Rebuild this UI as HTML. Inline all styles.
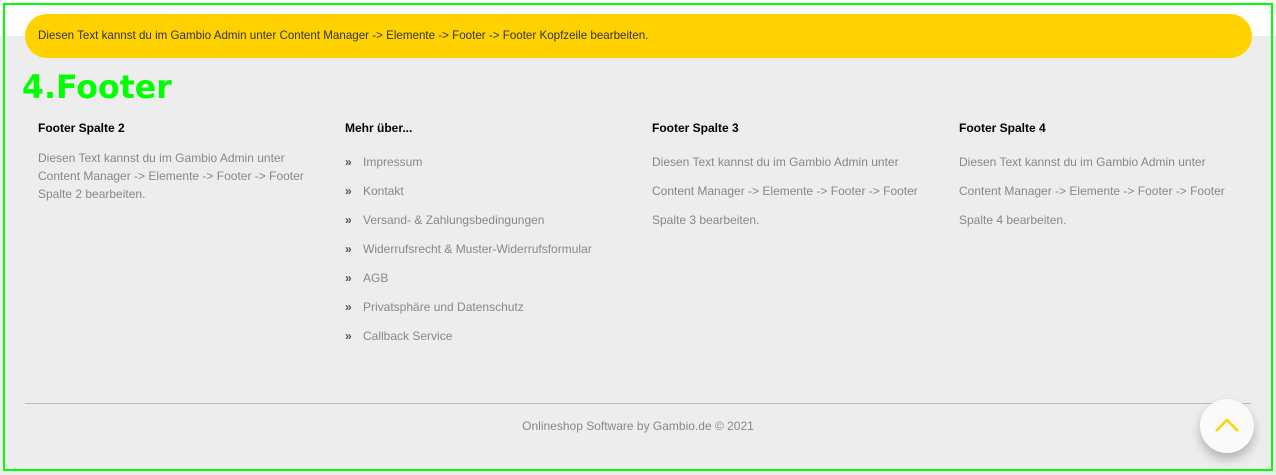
<!DOCTYPE html>
<html><head><meta charset="utf-8"><style>
*{margin:0;padding:0;box-sizing:border-box}
body{width:1276px;height:475px;background:#ededed;font-family:"Liberation Sans",sans-serif;position:relative;overflow:hidden}
.top{position:absolute;left:0;top:0;width:1276px;height:36px;background:#fff}
.frame{position:absolute;left:3px;top:3px;width:1270px;height:468px;border:2px solid #00ff00}
.bar{position:absolute;left:25px;top:14px;width:1227px;height:44px;background:#ffd200;border-radius:22px;font-size:11.6px;color:#333;padding-left:13px;line-height:44px}
h1{position:absolute;left:22px;top:70px;font-family:"DejaVu Sans",sans-serif;font-weight:bold;font-size:31.6px;color:#00ff00}
.col{position:absolute;top:120px;width:290px;font-size:12px;color:#888}
.col h3{font-size:12px;color:#000;font-weight:bold;height:26px;line-height:16px}
.col p{line-height:18px;margin-top:3px}
.col p.w{line-height:29px;margin-top:2px}
.col ul{list-style:none;margin-top:2px}
.col li{height:29px;line-height:29px}
.col li b{color:#555;font-size:12px;margin-right:7px;display:inline-block;width:11px}
hr{position:absolute;left:25px;top:403px;width:1226px;border:0;border-top:1px solid #bbb}
.copy{position:absolute;top:419px;left:0;width:1276px;text-align:center;font-size:12px;color:#888}
.btn{position:absolute;left:1200px;top:399px;width:54px;height:54px;border-radius:50%;background:#fafafa;box-shadow:0 6px 10px rgba(0,0,0,.25)}
</style></head><body>
<div class="top"></div>
<div class="bar">Diesen Text kannst du im Gambio Admin unter Content Manager -&gt; Elemente -&gt; Footer -&gt; Footer Kopfzeile bearbeiten.</div>
<h1>4.Footer</h1>
<div class="col" style="left:38px"><h3>Footer Spalte 2</h3><p>Diesen Text kannst du im Gambio Admin unter Content Manager -&gt; Elemente -&gt; Footer -&gt; Footer Spalte 2 bearbeiten.</p></div>
<div class="col" style="left:345px"><h3>Mehr über...</h3><ul>
<li><b>»</b>Impressum</li><li><b>»</b>Kontakt</li><li><b>»</b>Versand- &amp; Zahlungsbedingungen</li><li><b>»</b>Widerrufsrecht &amp; Muster-Widerrufsformular</li><li><b>»</b>AGB</li><li><b>»</b>Privatsphäre und Datenschutz</li><li><b>»</b>Callback Service</li></ul></div>
<div class="col" style="left:652px"><h3>Footer Spalte 3</h3><p class="w">Diesen Text kannst du im Gambio Admin unter Content Manager -&gt; Elemente -&gt; Footer -&gt; Footer Spalte 3 bearbeiten.</p></div>
<div class="col" style="left:959px"><h3>Footer Spalte 4</h3><p class="w">Diesen Text kannst du im Gambio Admin unter Content Manager -&gt; Elemente -&gt; Footer -&gt; Footer Spalte 4 bearbeiten.</p></div>
<hr>
<div class="copy">Onlineshop Software by Gambio.de © 2021</div>
<div class="btn"><svg width="54" height="54" viewBox="0 0 54 54"><path d="M16 32 L27 21 L38 32" fill="none" stroke="#ffd200" stroke-width="2.5"/></svg></div>
<div class="frame"></div>
</body></html>
